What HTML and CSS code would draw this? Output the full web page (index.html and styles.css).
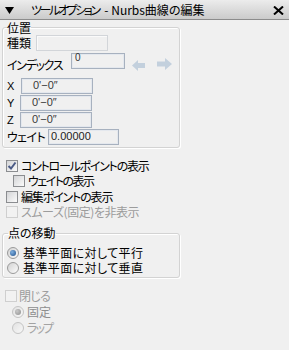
FILE: index.html
```html
<!DOCTYPE html>
<html lang="ja">
<head>
<meta charset="utf-8">
<link rel="stylesheet" href="styles.css">
</head>
<body>
<div class="panel">
  <div class="titlebar">
    <svg class="tri" width="9" height="7" viewBox="0 0 9 7"><polygon points="0,0 9,0 4.5,7" fill="#000"/></svg>
    <span class="title"><span class="kana">ツールオプション</span> - Nurbs曲線の編集</span>
    <svg class="close" width="11" height="9" viewBox="0 0 11 9"><path d="M1 0.5 L10 8.5 M10 0.5 L1 8.5" stroke="#000" stroke-width="2"/></svg>
  </div>
  <div class="content">
    <fieldset class="group g1">
      <legend>位置</legend>
      <div class="row r-kind"><span class="lbl l-kind">種類</span><span class="field kind"></span></div>
      <div class="row r-index">
        <span class="lbl l-index">インデックス</span><span class="field idx">0</span>
        <svg class="arrow a-left" width="13" height="11" viewBox="0 0 13 11"><polygon points="0,5.5 6,0 6,3 13,3 13,8 6,8 6,11" fill="#c3d0dd"/></svg>
        <svg class="arrow a-right" width="15" height="12" viewBox="0 0 15 12"><polygon points="15,6 8,0 8,3.5 0,3.5 0,8.5 8,8.5 8,12" fill="#c3d0dd"/></svg>
      </div>
      <div class="row r-coord first"><span class="lbl l-axis l-x">X</span><span class="field coord">0'−0″</span></div>
      <div class="row r-coord"><span class="lbl l-axis">Y</span><span class="field coord">0'−0″</span></div>
      <div class="row r-coord"><span class="lbl l-axis">Z</span><span class="field coord">0'−0″</span></div>
      <div class="row r-coord"><span class="lbl l-weight">ウェイト</span><span class="field weight">0.00000</span></div>
    </fieldset>

    <div class="checks">
      <div class="crow"><span class="cb checked"><svg width="10" height="10" viewBox="0 0 10 10"><path d="M1.5 5 L4 7.5 L8.5 1.5" fill="none" stroke="#4b5b86" stroke-width="2"/></svg></span><span class="ctext s-ctrl">コントロールポイントの表示</span></div>
      <div class="crow indent"><span class="cb"></span><span class="ctext s-wt">ウェイトの表示</span></div>
      <div class="crow"><span class="cb"></span><span class="ctext s-edit">編集ポイントの表示</span></div>
      <div class="crow disabled"><span class="cb"></span><span class="ctext s-smooth">スムーズ(固定)を非表示</span></div>
    </div>

    <fieldset class="group g2">
      <legend>点の移動</legend>
      <div class="rrow"><span class="rd on"></span><span class="rtext s-plane">基準平面に対して平行</span></div>
      <div class="rrow"><span class="rd"></span><span class="rtext s-plane">基準平面に対して垂直</span></div>
    </fieldset>

    <div class="closing">
      <div class="crow disabled close-row"><span class="cb"></span><span class="ctext s-close">閉じる</span></div>
      <div class="rrow sub disabled"><span class="rd on"></span><span class="rtext">固定</span></div>
      <div class="rrow sub disabled light"><span class="rd"></span><span class="rtext s-wrap">ラップ</span></div>
    </div>
  </div>
</div>
</body>
</html>
```

FILE: styles.css
```css
html, body {
  margin: 0;
  padding: 0;
  background: #f0f0f0;
}
body {
  font-family: "Noto Sans CJK JP", "Noto Sans", sans-serif;
  font-size: 12px;
  color: #000;
  font-feature-settings: "palt";
}
.panel {
  width: 289px;
  height: 350px;
  background: #f0f0f0;
  overflow: hidden;
}
.titlebar {
  height: 19px;
  border-bottom: 1px solid #8c8c8c;
  background: linear-gradient(#ececec, #cbcbcb);
  display: flex;
  align-items: center;
  padding-left: 5px;
}
.tri { margin-top: 2px; flex: none; }
.title {
  margin-left: 17px;
  font-size: 12px;
  line-height: 19px;
  white-space: nowrap;
}
.title .kana { letter-spacing: -2.4px; padding-right: 3px; }
.close {
  margin-left: auto;
  margin-right: 5px;
  margin-top: 2px;
  flex: none;
}
.content { padding-left: 2px; }

.group {
  margin: 0;
  border: 1px solid #d3d3d3;
  border-radius: 3px;
  box-shadow: 1px 1px 0 #fff, inset 1px 1px 0 #fff;
  width: 178px;
  box-sizing: border-box;
  min-width: 0;
}
.group legend {
  padding: 0;
  font-size: 12px;
}
.g1 { padding: 0 4px 2px 4px; }
.g1 legend { line-height: 15px; }

.row { display: flex; align-items: center; height: 16px; }
.lbl { white-space: nowrap; line-height: 14px; flex: none; }
.l-kind { width: 29px; }
.l-index { width: 64px; align-self: flex-end; margin-bottom: -3px; letter-spacing: -1.3px; }
.l-axis { width: 13px; font-family: "Liberation Sans", sans-serif; font-size: 11px; }
.l-x { width: 14px; }
.l-weight { width: 41px; letter-spacing: -0.6px; }

.field {
  box-sizing: border-box;
  height: 16px;
  flex: none;
  background: #f0f0f0;
  white-space: nowrap;
}
.kind {
  width: 72px;
  border: 1px solid #d2d5d9;
  box-shadow: inset 1px 1px 0 #fafafa;
}
.r-index { margin-top: 2px; }
.idx {
  width: 54px;
  border: 1px solid #a7b1bf;
  box-shadow: inset 0 0 0 1px #e4e8ee;
  font-family: "Liberation Sans", sans-serif;
  font-size: 10px;
  line-height: 7px;
  padding-left: 3px;
  color: #333;
}
.arrow { flex: none; align-self: flex-end; }
.a-left { margin-left: 7px; margin-bottom: -2px; }
.a-right { margin-left: 12px; margin-bottom: -1px; }

.r-coord { margin-top: 1px; }
.r-coord.first { margin-top: 9px; }
.coord, .weight {
  border: 1px solid #a7b1bf;
  box-shadow: inset 0 0 0 1px #e4e8ee;
  font-family: "Liberation Sans", sans-serif;
  font-size: 11px;
  line-height: 12px;
  color: #3a3a3a;
}
.coord { width: 72px; padding-left: 11px; }
.weight { width: 71px; padding-left: 2px; color: #222; }

.checks { margin-top: 10px; }
.crow {
  display: flex;
  align-items: center;
  height: 15.5px;
  padding-left: 4px;
}
.crow.indent { padding-left: 11px; }
.cb {
  box-sizing: border-box;
  width: 12px;
  height: 12px;
  flex: none;
  border: 1px solid #8b8d90;
  background: linear-gradient(135deg, #d3d4d6, #fbfbfb);
  display: flex;
  align-items: center;
  justify-content: center;
}
.ctext { margin-left: 3px; white-space: nowrap; line-height: 14px; }
.crow.disabled .cb { border-color: #cfcfcf; background: #f2f2f2; }
.crow.disabled .ctext { color: #9c9c9c; }

.s-ctrl { letter-spacing: -1.25px; }
.s-wt { letter-spacing: -1.5px; }
.s-edit { letter-spacing: -1.15px; }
.s-smooth { letter-spacing: -0.45px; }
.s-plane { letter-spacing: 0.4px; }
.s-close { letter-spacing: -0.7px; }
.s-wrap { letter-spacing: -1.9px; }

.g2 {
  margin-top: 6px;
  padding: 5px 4px 2px 2px;
}
.g2 legend { line-height: 14px; margin-left: 3px; }
.rrow {
  display: flex;
  align-items: center;
  height: 15px;
  padding-left: 2px;
}
.rd {
  box-sizing: border-box;
  width: 12px;
  height: 12px;
  flex: none;
  border-radius: 50%;
  border: 1px solid #9a9a9a;
  background: linear-gradient(135deg, #d2d2d2, #fcfcfc);
  display: flex;
  align-items: center;
  justify-content: center;
}
.rd.on::after {
  content: "";
  width: 6px;
  height: 6px;
  border-radius: 50%;
  background: radial-gradient(circle at 35% 35%, #7fb0e0, #1f4f8a);
}
.rtext { margin-left: 4px; white-space: nowrap; line-height: 14px; }

.closing { margin-top: 10px; }
.close-row { height: 16px; padding-left: 3px; }
.close-row .ctext { margin-left: 2px; }
.rrow.sub { height: 16px; padding-left: 10px; }
.rrow.sub .rtext { margin-left: 3px; }
.rrow.disabled .rtext { color: #8e8e8e; }
.rrow.disabled.light .rtext { color: #a3a3a3; }
.rrow.disabled .rd { border-color: #c4c4c4; background: linear-gradient(135deg, #e2e2e2, #f8f8f8); }
.rrow.disabled .rd.on::after { background: radial-gradient(circle at 35% 35%, #c8c8c8, #8f8f8f); }
```
